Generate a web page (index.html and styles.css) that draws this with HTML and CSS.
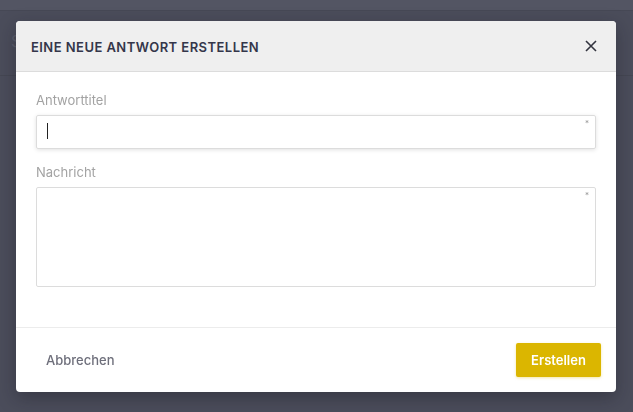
FILE: index.html
```html
<!DOCTYPE html>
<html>
    <head>
        <meta charset="utf-8"/>
        <link rel="stylesheet" href="styles.css">
    </head>
    <body>
        <div class="page">
            <div class="page-top"></div>
            <div class="page-bar"><span class="page-title">S</span></div>
        </div>

        <div class="overlay">
            <div class="modal">
                <header class="modal-header">
                    <h2>Eine neue Antwort erstellen</h2>
                    <button class="close-btn">
                        <svg width="12" height="12" viewBox="0 0 12 12">
                            <path d="M1 1 L11 11 M11 1 L1 11" stroke="#33343f" stroke-width="1.6" fill="none"/>
                        </svg>
                    </button>
                </header>

                <div class="modal-body">
                    <div class="field">
                        <label for="title-input">Antworttitel</label>
                        <div class="control">
                            <input type="text" id="title-input" class="text-input">
                            <span class="caret"></span>
                            <span class="required">*</span>
                        </div>
                    </div>
                    <div class="field">
                        <label for="message-input">Nachricht</label>
                        <div class="control">
                            <textarea id="message-input" class="text-area"></textarea>
                            <span class="required">*</span>
                        </div>
                    </div>
                </div>

                <footer class="modal-footer">
                    <button class="cancel-btn">Abbrechen</button>
                    <button class="create-btn">Erstellen</button>
                </footer>
            </div>
        </div>
    </body>
</html>
```

FILE: styles.css
```css
body {
    margin: 0;
    padding: 0;
    height: 100vh;
    background: #4b4d5b;
    font-family: Inter, "Noto Sans", sans-serif;
    overflow: hidden;
}

.page-top {
    height: 10px;
    background: #535563;
    border-bottom: 1px solid #464855;
}

.page-bar {
    height: 64px;
    border-bottom: 1px solid #454753;
    display: flex;
    align-items: center;
    padding-left: 11px;
}

.page-title {
    color: #5c5e6b;
    font-size: 16px;
    margin-top: -4px;
}

.overlay {
    position: fixed;
    inset: 0;
    display: flex;
    justify-content: flex-start;
    align-items: flex-start;
    padding: 21px 0 0 16px;
}

.modal {
    width: 600px;
    background: #fff;
    border-radius: 4px;
    box-shadow: 0 6px 18px rgba(20, 20, 30, 0.35);
    overflow: hidden;
}

.modal-header {
    height: 50px;
    background: #efefef;
    border-bottom: 1px solid #dcdcdc;
    display: flex;
    align-items: center;
    justify-content: space-between;
    padding: 0 19px 0 15px;
}

.modal-header h2 {
    margin: 0;
    font-size: 13px;
    font-weight: 600;
    letter-spacing: 0.45px;
    text-transform: uppercase;
    color: #34364a;
    padding-top: 1px;
}

.close-btn {
    background: none;
    border: 0;
    padding: 0;
    display: flex;
    cursor: pointer;
}

.modal-body {
    padding: 19px 20px 20px;
    border-bottom: 1px solid #ececec;
}

.field {
    margin-bottom: 14px;
}

.field:last-child {
    margin-bottom: 20px;
}

.field label {
    display: block;
    font-size: 13px;
    line-height: 18px;
    color: #a3a3a3;
    margin-bottom: 6px;
}

.control {
    position: relative;
}

.text-input,
.text-area {
    display: block;
    box-sizing: border-box;
    width: 100%;
    border: 1px solid #dcdcdc;
    border-radius: 2px;
    font-family: inherit;
    font-size: 13px;
    padding: 0 10px;
    outline: none;
}

.text-input {
    height: 34px;
    box-shadow: 0 1px 4px rgba(0, 0, 0, 0.12);
}

.text-area {
    height: 100px;
    resize: none;
}

.caret {
    position: absolute;
    left: 11px;
    top: 8px;
    width: 1px;
    height: 16px;
    background: #222;
}

.required {
    position: absolute;
    right: 7px;
    top: 3px;
    font-size: 8px;
    color: #999;
}

.modal-footer {
    height: 64px;
    display: flex;
    align-items: center;
    justify-content: space-between;
    padding: 0 15px;
}

.cancel-btn {
    background: none;
    border: 0;
    padding: 0 15px;
    height: 34px;
    font-family: inherit;
    font-size: 13px;
    font-weight: 500;
    color: #6e6f7b;
}

.create-btn {
    background: #dbb600;
    border: 0;
    border-radius: 2px;
    width: 85px;
    height: 34px;
    font-family: inherit;
    font-size: 13px;
    font-weight: 600;
    color: #fff;
    box-shadow: 0 1px 3px rgba(219, 182, 0, 0.35);
}
```
